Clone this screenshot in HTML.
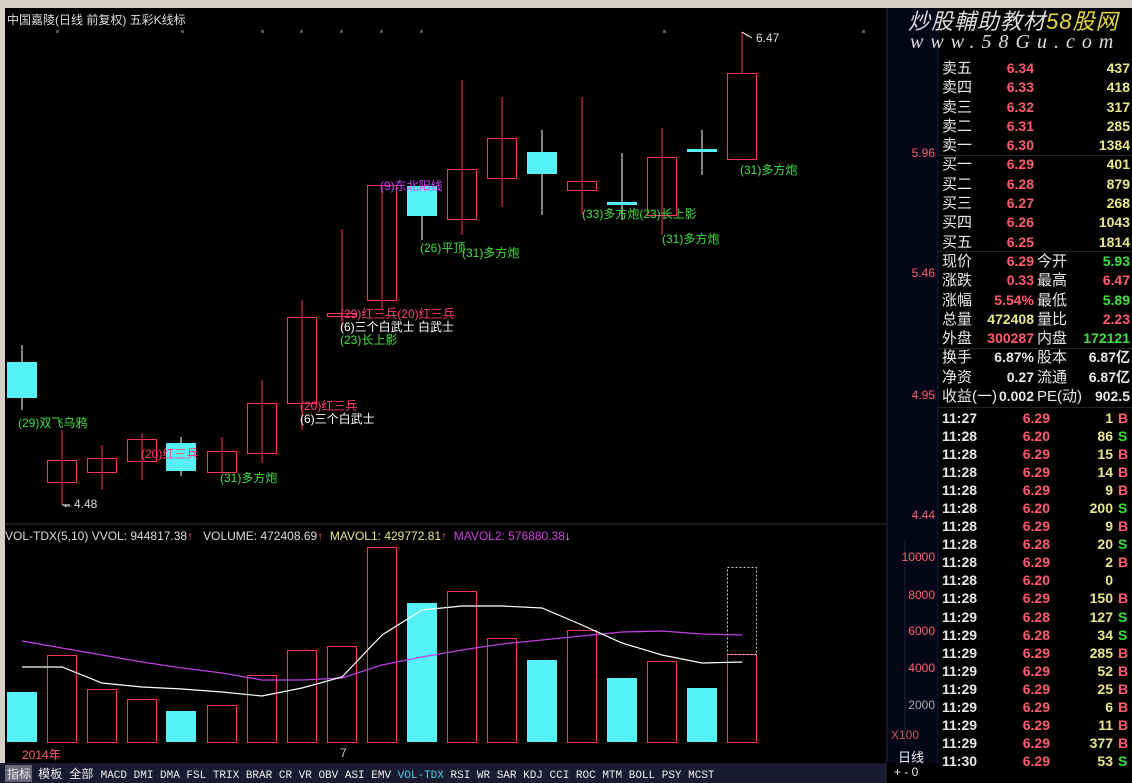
<!DOCTYPE html>
<html><head><meta charset="utf-8">
<style>
*{margin:0;padding:0;box-sizing:border-box}
body{width:1132px;height:783px;background:#000;overflow:hidden;position:relative;font-family:"Liberation Sans","Noto Sans CJK SC",sans-serif;color:#ddd}
.a{position:absolute;white-space:nowrap}
.r{position:absolute;white-space:nowrap;text-align:right}
.t{font-size:14px;line-height:18px}
.red{color:#ff5c6c}.grn{color:#3fe03f}.yel{color:#e8e88a}.wh{color:#e8e8e8}
.lbl{font-size:12px;color:#ff6070}
.g{color:#40e040;font-size:12px}
.p{color:#ff4070;font-size:12px}
.w{color:#fff;font-size:12px}
</style></head><body>
<div class="a" style="left:0;top:0;width:1132px;height:8px;background:#d4d0c8"></div>
<div class="a" style="left:0;top:8px;width:5px;height:755px;background:#d4d0c8"></div>
<div class="a" style="left:887px;top:8px;width:51px;height:755px;background:#050518"></div>
<svg class="a" style="left:0;top:0" width="1132" height="783">
<line x1="887" y1="8" x2="887" y2="763" stroke="#223" />
<line x1="5" y1="524" x2="887" y2="524" stroke="#333" />
<line x1="938" y1="8" x2="938" y2="763" stroke="#111a40"/>
<line x1="905" y1="540" x2="905" y2="745" stroke="#223"/>
<g fill="none" stroke="#ff3355" stroke-width="1">
<line x1="62" y1="430" x2="62" y2="505"/><rect x="47.5" y="460.5" width="29" height="22"/>
<line x1="102" y1="445" x2="102" y2="490"/><rect x="87.5" y="458.5" width="29" height="14"/>
<line x1="142" y1="433" x2="142" y2="480"/><rect x="127.5" y="439.5" width="29" height="22"/>
<line x1="222" y1="437" x2="222" y2="472"/><rect x="207.5" y="451.5" width="29" height="21"/>
<line x1="262" y1="380" x2="262" y2="463"/><rect x="247.5" y="403.5" width="29" height="50"/>
<line x1="302" y1="300" x2="302" y2="430"/><rect x="287.5" y="317.5" width="29" height="86"/>
<line x1="342" y1="229" x2="342" y2="330"/><rect x="327.5" y="313.5" width="29" height="3"/>
<line x1="382" y1="185" x2="382" y2="310"/><rect x="367.5" y="185.5" width="29" height="115"/>
<line x1="462" y1="80" x2="462" y2="235"/><rect x="447.5" y="169.5" width="29" height="50"/>
<line x1="502" y1="97" x2="502" y2="207"/><rect x="487.5" y="138.5" width="29" height="40"/>
<line x1="582" y1="97" x2="582" y2="214"/><rect x="567.5" y="181.5" width="29" height="9"/>
<line x1="662" y1="128" x2="662" y2="235"/><rect x="647.5" y="157.5" width="29" height="58"/>
<line x1="742" y1="32" x2="742" y2="73"/><rect x="727.5" y="73.5" width="29" height="86"/>
</g>
<g stroke="#fff"><line x1="22" y1="345" x2="22" y2="410"/><line x1="181" y1="437" x2="181" y2="476"/>
<line x1="422" y1="186" x2="422" y2="240"/><line x1="542" y1="130" x2="542" y2="215"/>
<line x1="622" y1="153" x2="622" y2="220"/><line x1="702" y1="130" x2="702" y2="175"/>
<polyline points="748,36 742,32 752,38" fill="none"/><line x1="62" y1="505" x2="70" y2="505"/></g>
<g fill="#55f0f8">
<rect x="7" y="362" width="30" height="36"/><rect x="166" y="443" width="30" height="28"/>
<rect x="407" y="186" width="30" height="30"/><rect x="527" y="152" width="30" height="22"/>
<rect x="607" y="202" width="30" height="3"/><rect x="687" y="149" width="30" height="3"/>
</g>
<g fill="#55f0f8">
<rect x="7" y="692" width="30" height="50"/><rect x="166" y="711" width="30" height="31"/>
<rect x="407" y="603" width="30" height="139"/><rect x="527" y="660" width="30" height="82"/>
<rect x="607" y="678" width="30" height="64"/><rect x="687" y="688" width="30" height="54"/>
</g>
<g fill="none" stroke="#ff3355">
<rect x="47.5" y="655.5" width="29" height="87"/><rect x="87.5" y="689.5" width="29" height="53"/>
<rect x="127.5" y="699.5" width="29" height="43"/><rect x="207.5" y="705.5" width="29" height="37"/>
<rect x="247.5" y="675.5" width="29" height="67"/><rect x="287.5" y="650.5" width="29" height="92"/>
<rect x="327.5" y="646.5" width="29" height="96"/><rect x="367.5" y="547.5" width="29" height="195"/>
<rect x="447.5" y="591.5" width="29" height="151"/><rect x="487.5" y="638.5" width="29" height="104"/>
<rect x="567.5" y="630.5" width="29" height="112"/><rect x="647.5" y="661.5" width="29" height="81"/>
<rect x="727.5" y="654.5" width="29" height="88"/>
<rect x="727.5" y="567.5" width="29" height="87" stroke-dasharray="2,2" stroke="#ccc"/>
</g>
<polyline fill="none" stroke="#c040e0" stroke-width="1.3" points="22,641 62,648 102,655 142,662 182,668 222,673 262,680 302,680 342,678 382,665 422,657 462,650 502,644 542,640 582,636 622,632 662,631 702,634 742,635"/>
<polyline fill="none" stroke="#fff" stroke-width="1.2" points="22,667 62,667 102,683 142,687 182,689 222,692 262,696 302,688 342,677 382,635 422,610 462,606 502,606 542,608 582,625 622,643 662,655 702,663 742,662"/>
<g fill="#555"><rect x="181" y="30" width="3" height="3"/><rect x="261" y="30" width="3" height="3"/><rect x="300" y="30" width="3" height="3"/><rect x="340" y="30" width="3" height="3"/><rect x="380" y="30" width="3" height="3"/><rect x="420" y="30" width="3" height="3"/><rect x="56" y="30" width="3" height="3"/><rect x="663" y="30" width="3" height="3"/><rect x="862" y="30" width="3" height="3"/></g>
</svg>
<div class="a" style="left:7px;top:11px;font-size:12px;color:#ddd">中国嘉陵(日线 前复权) 五彩K线标</div>
<div class="a" style="left:756px;top:31px;font-size:12px;color:#ddd">6.47</div>
<div class="a" style="left:62px;top:497px;font-size:12px;color:#ddd">←4.48</div>
<div class="a g" style="left:18px;top:414px">(29)双飞乌鸦</div>
<div class="a p" style="left:141px;top:445px">(20)红三兵</div>
<div class="a g" style="left:220px;top:469px">(31)多方炮</div>
<div class="a p" style="left:300px;top:397px">(20)红三兵</div>
<div class="a w" style="left:300px;top:410px">(6)三个白武士</div>
<div class="a p" style="left:340px;top:305px">(29)红三兵(20)红三兵</div>
<div class="a w" style="left:340px;top:318px">(6)三个白武士 白武士</div>
<div class="a g" style="left:340px;top:331px">(23)长上影</div>
<div class="a p" style="left:380px;top:177px;color:#d040ff">(9)东北阳线</div>
<div class="a g" style="left:420px;top:239px">(26)平顶</div>
<div class="a g" style="left:462px;top:244px">(31)多方炮</div>
<div class="a g" style="left:582px;top:205px">(33)多方炮(23)长上影</div>
<div class="a g" style="left:662px;top:230px">(31)多方炮</div>
<div class="a g" style="left:740px;top:161px">(31)多方炮</div>
<div class="a" style="left:5px;top:529px;font-size:12px;color:#ddd">VOL-TDX(5,10) VVOL: 944817.38<span class="red">↑</span>&nbsp;&nbsp;&nbsp;VOLUME: 472408.69<span class="red">↑</span>&nbsp;&nbsp;<span class="yel">MAVOL1: 429772.81</span><span class="red">↑</span>&nbsp;&nbsp;<span style="color:#d040e0">MAVOL2: 576880.38</span>↓</div>
<div class="a lbl" style="left:22px;top:746px">2014年</div>
<div class="a" style="left:340px;top:746px;font-size:12px;color:#ccc">7</div>
<div class="r lbl" style="left:887px;width:48px;top:146px">5.96</div>
<div class="r lbl" style="left:887px;width:48px;top:266px">5.46</div>
<div class="r lbl" style="left:887px;width:48px;top:388px">4.95</div>
<div class="r lbl" style="left:887px;width:48px;top:508px">4.44</div>
<div class="r lbl" style="left:887px;width:48px;top:550px">10000</div>
<div class="r lbl" style="left:887px;width:48px;top:588px">8000</div>
<div class="r lbl" style="left:887px;width:48px;top:624px">6000</div>
<div class="r lbl" style="left:887px;width:48px;top:661px">4000</div>
<div class="r lbl" style="left:887px;width:48px;top:698px;color:#aaa">2000</div>
<div class="a lbl" style="left:891px;top:728px;color:#c55">X100</div>
<div class="a" style="left:898px;top:747px;font-size:13px;color:#eee">日线</div>
<div class="a" style="left:894px;top:765px;font-size:12px;color:#eee">+ - 0</div>
<div class="a" style="left:0;top:763px;width:887px;height:20px;background:#1a1a30"></div>
<div class="a" style="left:5px;top:765px;width:27px;height:17px;background:#667"></div>
<div class="a" style="left:7px;top:765px;font-size:12px;color:#eee;font-family:'Liberation Mono','Noto Sans CJK SC',monospace;word-spacing:0px">指标 模板 全部 <span style="font-size:11px">MACD DMI DMA FSL TRIX BRAR CR VR OBV ASI EMV <span style="color:#40d0e0">VOL-TDX</span> RSI WR SAR KDJ CCI ROC MTM BOLL PSY MCST</span></div>
<div class="a" style="left:908px;top:4px;font-size:22px;font-style:italic;color:#ddd;letter-spacing:1px">炒股輔助教材<span style="color:#e8d840">58股网</span></div>
<div class="a" style="left:910px;top:31px;font-size:20px;font-style:italic;color:#ddd;letter-spacing:7px;font-family:'Liberation Serif',serif">www.58Gu.com</div>
<div id="rp"></div>
<div class="a t wh" style="left:942px;top:59px;line-height:19.3px;font-size:15px">卖五<br>卖四<br>卖三<br>卖二<br>卖一<br>买一<br>买二<br>买三<br>买四<br>买五</div>
<div class="r t red" style="left:990px;width:44px;top:59px;line-height:19.3px;font-weight:bold">6.34<br>6.33<br>6.32<br>6.31<br>6.30<br>6.29<br>6.28<br>6.27<br>6.26<br>6.25</div>
<div class="r t yel" style="left:1080px;width:50px;top:59px;line-height:19.3px;font-weight:bold">437<br>418<br>317<br>285<br>1384<br>401<br>879<br>268<br>1043<br>1814</div>
<div class="a" style="left:938px;top:155px;width:194px;border-top:1px solid #223"></div>
<div class="a" style="left:938px;top:251px;width:194px;border-top:1px solid #223"></div>
<div class="a" style="left:938px;top:348px;width:194px;border-top:1px solid #223"></div>
<div class="a" style="left:938px;top:407px;width:194px;border-top:1px solid #223"></div>
<div class="a t wh" style="left:942px;top:252px;line-height:19.3px;font-size:15px">现价<br>涨跌<br>涨幅<br>总量<br>外盘<br>换手<br>净资<br>收益(一)</div>
<div class="r t" style="left:980px;width:54px;top:252px;line-height:19.3px;font-weight:bold"><span class="red">6.29</span><br><span class="red">0.33</span><br><span class="red">5.54%</span><br><span class="yel">472408</span><br><span class="red">300287</span><br><span class="wh">6.87%</span><br><span class="wh">0.27</span><br><span class="wh">0.002</span></div>
<div class="a t wh" style="left:1037px;top:252px;line-height:19.3px;font-size:15px">今开<br>最高<br>最低<br>量比<br>内盘<br>股本<br>流通<br>PE(动)</div>
<div class="r t" style="left:1070px;width:60px;top:252px;line-height:19.3px;font-weight:bold"><span class="grn">5.93</span><br><span class="red">6.47</span><br><span class="grn">5.89</span><br><span class="red">2.23</span><br><span class="grn">172121</span><br><span class="wh">6.87亿</span><br><span class="wh">6.87亿</span><br><span class="wh">902.5</span></div>
<div class="a t wh" style="left:942px;top:409px;line-height:18.05px;font-weight:bold">11:27<br>11:28<br>11:28<br>11:28<br>11:28<br>11:28<br>11:28<br>11:28<br>11:28<br>11:28<br>11:28<br>11:29<br>11:29<br>11:29<br>11:29<br>11:29<br>11:29<br>11:29<br>11:29<br>11:30</div>
<div class="r t red" style="left:1000px;width:50px;top:409px;line-height:18.05px;font-weight:bold">6.29<br>6.20<br>6.29<br>6.29<br>6.29<br>6.20<br>6.29<br>6.28<br>6.29<br>6.20<br>6.29<br>6.28<br>6.28<br>6.29<br>6.29<br>6.29<br>6.29<br>6.29<br>6.29<br>6.29</div>
<div class="r t yel" style="left:1070px;width:43px;top:409px;line-height:18.05px;font-weight:bold">1<br>86<br>15<br>14<br>9<br>200<br>9<br>20<br>2<br>0<br>150<br>127<br>34<br>285<br>52<br>25<br>6<br>11<br>377<br>53</div>
<div class="a t" style="left:1118px;top:409px;line-height:18.05px;font-weight:bold"><span class="red">B</span><br><span class="grn">S</span><br><span class="red">B</span><br><span class="red">B</span><br><span class="red">B</span><br><span class="grn">S</span><br><span class="red">B</span><br><span class="grn">S</span><br><span class="red">B</span><br>&nbsp;<br><span class="red">B</span><br><span class="grn">S</span><br><span class="grn">S</span><br><span class="red">B</span><br><span class="red">B</span><br><span class="red">B</span><br><span class="red">B</span><br><span class="red">B</span><br><span class="red">B</span><br><span class="grn">S</span></div>
</body></html>
